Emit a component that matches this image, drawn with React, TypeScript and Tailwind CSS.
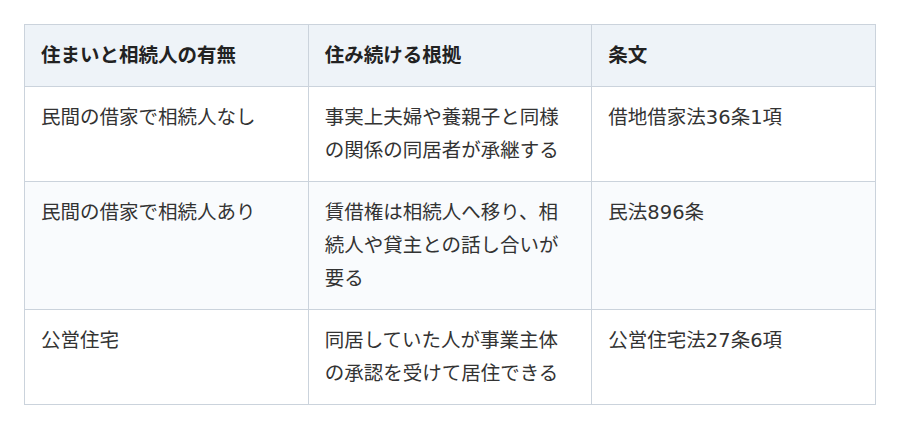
import React from "react";

const rows: string[][] = [
  ["民間の借家で相続人なし", "事実上夫婦や養親子と同様の関係の同居者が承継する", "借地借家法36条1項"],
  ["民間の借家で相続人あり", "賃借権は相続人へ移り、相続人や貸主との話し合いが要る", "民法896条"],
  ["公営住宅", "同居していた人が事業主体の承認を受けて居住できる", "公営住宅法27条6項"],
];

export default function App() {
  return (
    <div
      className="w-[900px] h-[429px] bg-white pt-[24px] pl-[24px]"
      style={{ fontFamily: '"DejaVu Sans", "Noto Sans CJK JP", sans-serif' }}
    >
      <table className="w-[852px] table-fixed border-collapse text-[19.5px] leading-[33px]">
        <thead>
          <tr className="bg-[#eef3f8]">
            {["住まいと相続人の有無", "住み続ける根拠", "条文"].map((h) => (
              <th
                key={h}
                className="border border-[#cbd3dc] px-[16px] py-[14px] text-left font-bold text-[#222222]"
              >
                {h}
              </th>
            ))}
          </tr>
        </thead>
        <tbody>
          {rows.map((r, i) => (
            <tr key={i} className={i % 2 === 1 ? "bg-[#f9fbfd]" : "bg-white"}>
              {r.map((c, j) => (
                <td
                  key={j}
                  className="border border-[#cbd3dc] px-[16px] py-[14px] align-top text-[#333333]"
                >
                  {c}
                </td>
              ))}
            </tr>
          ))}
        </tbody>
      </table>
    </div>
  );
}
